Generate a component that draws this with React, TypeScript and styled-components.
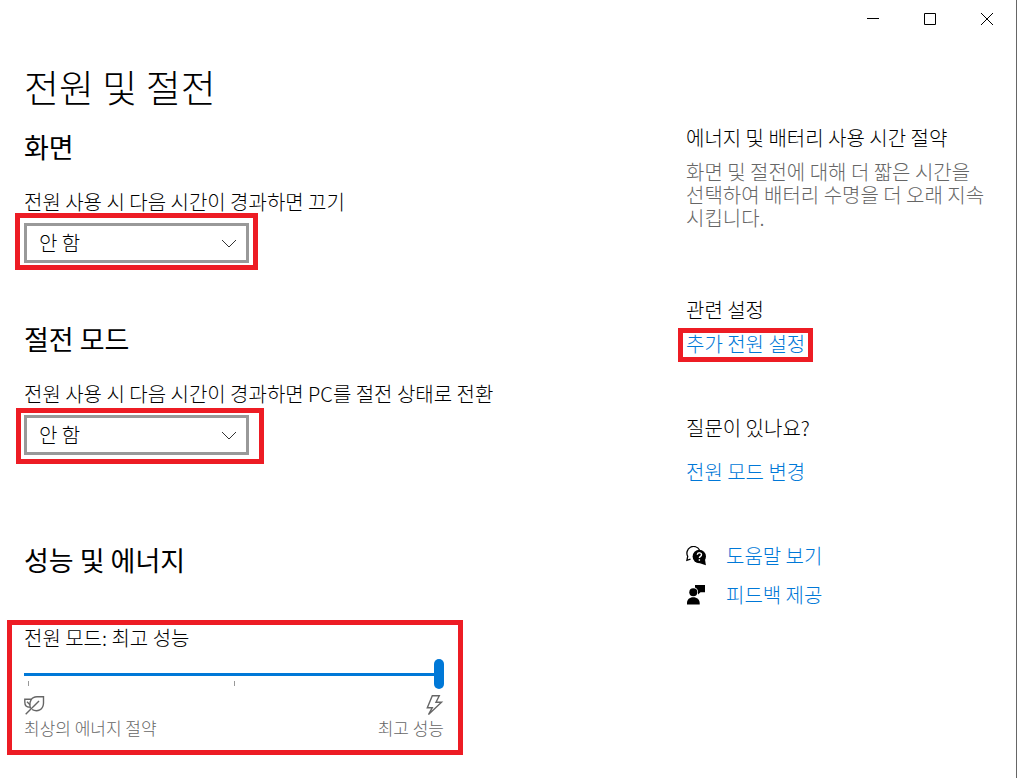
import React, { useState } from "react";
import styled, { createGlobalStyle, css } from "styled-components";

const BLUE = "#0078d7";
const RED = "#ed1c24";

const GlobalStyle = createGlobalStyle`
  * { box-sizing: border-box; }
  body {
    margin: 0;
    background: #fff;
    color: #000;
    font-family: "Noto Sans CJK KR", "Malgun Gothic", sans-serif;
    font-size: 20px;
    font-weight: 300;
    line-height: 24px;
  }
  h1, h2, h3, p { margin: 0; }
`;

const Window = styled.div`
  min-height: 100vh;
  border-right: 1px solid #666;
`;

const TitleBar = styled.header`
  display: flex;
  justify-content: flex-end;
  height: 38px;
  padding-right: 1px;
`;

const CaptionButton = styled.button`
  display: grid;
  place-items: center;
  width: 57px;
  padding: 0;
  border: 0;
  background: none;
`;

const Columns = styled.div`
  display: flex;
  align-items: flex-start;
`;

const Main = styled.main`
  flex: 1;
  min-width: 0;
  padding: 23px 24px 20px;
`;

const PageTitle = styled.h1`
  font-size: 38px;
  font-weight: 300;
  line-height: 50px;
  margin-bottom: 18px;
`;

const Section = styled.section<{ $gap: number }>`
  margin-bottom: ${(p) => p.$gap}px;
`;

const SectionTitle = styled.h2<{ $gap?: number }>`
  font-size: 27px;
  font-weight: 400;
  line-height: 36px;
  margin-bottom: ${(p) => p.$gap ?? 25}px;
`;

const FieldLabel = styled.label`
  display: block;
  margin-bottom: 9px;
`;

/* Red frame drawn around a control to call attention to it. */
const marked = css<{ $mark: string }>`
  position: relative;
  &::after {
    content: "";
    position: absolute;
    inset: ${(p) => p.$mark};
    border: 5px solid ${RED};
    pointer-events: none;
  }
`;

const SelectBox = styled.div<{ $mark: string }>`
  ${marked}
  width: 225px;
  height: 40px;
  svg {
    position: absolute;
    right: 12px;
    top: 16px;
    pointer-events: none;
  }
`;

const Select = styled.select`
  appearance: none;
  width: 100%;
  height: 100%;
  padding: 0 36px 0 12px;
  border: 3px solid #999;
  border-radius: 0;
  background: #fff;
  color: #000;
  font: inherit;
`;

const PowerMode = styled.div<{ $mark: string }>`
  ${marked}
  width: 420px;
  max-width: 100%;
`;

const Slider = styled.input`
  appearance: none;
  display: block;
  width: 100%;
  height: 30px;
  margin: 0;
  background: linear-gradient(${BLUE}, ${BLUE}) center / 100% 3px no-repeat;
  &::-webkit-slider-thumb {
    appearance: none;
    width: 10px;
    height: 30px;
    border-radius: 5px;
    background: ${BLUE};
  }
`;

const Ticks = styled.div`
  display: flex;
  height: 5px;
  margin: -8px 0 8px 4px;
  span {
    width: 206px;
    border-left: 1px solid #999;
  }
`;

const Ends = styled.div`
  display: flex;
  justify-content: space-between;
  color: #666;
  font-size: 17px;
  line-height: 23px;
`;

const End = styled.div<{ $right?: boolean }>`
  display: flex;
  flex-direction: column;
  align-items: ${(p) => (p.$right ? "flex-end" : "flex-start")};
`;

const Sidebar = styled.aside`
  width: 330px;
  padding: 88px 27px 20px 0;
`;

const SideBlock = styled.section<{ $gap: number }>`
  margin-bottom: ${(p) => p.$gap}px;
`;

const SideTitle = styled.h3<{ $gap: number }>`
  font-size: 20px;
  font-weight: 300;
  line-height: 24px;
  margin-bottom: ${(p) => p.$gap}px;
`;

const Note = styled.p`
  color: #666;
  line-height: 23px;
`;

const Link = styled.a`
  color: ${BLUE};
  text-decoration: none;
`;

const MarkedLink = styled.div<{ $mark: string }>`
  ${marked}
  width: fit-content;
`;

const IconRow = styled.div`
  display: flex;
  align-items: center;
  gap: 19px;
  margin-bottom: 15px;
`;

const Chevron = () => (
  <svg width="16" height="10" viewBox="0 0 16 10" fill="none" stroke="#333">
    <path d="M1 1l7 7 7-7" />
  </svg>
);

const LeafIcon = () => (
  <svg width="22" height="22" viewBox="0 0 22 22" fill="none" stroke="#666" strokeWidth="1.4">
    <path d="M1.700 20.300L15 7" />
    <path d="M6.500 14.500C4.500 7.500 7.500 2.800 13 2.800h6.500V9c0 6.500-6 9.500-11.500 6.500" />
    <path d="M7 5.300H.8V8c0 3.500 2 5.200 5 5.200M3 7.800l3 3" />
  </svg>
);

const BoltIcon = () => (
  <svg width="18" height="22" viewBox="0 0 18 22" fill="none" stroke="#666" strokeWidth="1.4">
    <path d="M6.300 1.700h7L10 8.300h5.500L2.500 20.500l3.800-6.800H1.300z" />
  </svg>
);

const HelpIcon = () => (
  <svg width="21" height="21" viewBox="0 0 21 21">
    <path d="M4.500 13.200L.9 14.300l.8-4A6.300 6.300 0 1 1 13.500 4" fill="none" stroke="#000" strokeWidth="1.300" />
    <circle cx="13.300" cy="10.500" r="6.700" />
    <path d="M19 13.500l.9 5.700-6-2z" />
    <path d="M11.300 8.700c.2-2.600 4.200-2.400 4.200 0 0 1.700-2.100 1.600-2.100 3.300M13.400 13.200v1.500" fill="none" stroke="#fff" strokeWidth="1.400" />
  </svg>
);

const FeedbackIcon = () => (
  <svg width="21" height="21" viewBox="0 0 21 21">
    <circle cx="7.300" cy="7.300" r="4" />
    <path d="M1 19.500v-1.500c0-3.500 2.500-5.800 6.300-5.800s6.400 2.300 6.400 5.800v1.500zM9 0h10v7.300h-4.500L12 9.500V7C12 4.800 11 3.300 9 2.600z" />
  </svg>
);

function TimeoutField({ id, label, mark }: { id: string; label: string; mark: string }) {
  return (
    <>
      <FieldLabel htmlFor={id}>{label}</FieldLabel>
      <SelectBox $mark={mark}>
        <Select id={id}>
          <option>안 함</option>
        </Select>
        <Chevron />
      </SelectBox>
    </>
  );
}

export default function App() {
  const [mode, setMode] = useState(2);
  return (
    <Window>
      <GlobalStyle />
      <TitleBar>
        <CaptionButton aria-label="최소화">
          <svg width="12" height="12"><path d="M0 5.500h12" stroke="#000" /></svg>
        </CaptionButton>
        <CaptionButton aria-label="최대화">
          <svg width="12" height="12"><path d="M.5.5h11v11H.5z" fill="none" stroke="#000" /></svg>
        </CaptionButton>
        <CaptionButton aria-label="닫기">
          <svg width="12" height="12"><path d="M0 0l12 12M12 0L0 12" stroke="#000" /></svg>
        </CaptionButton>
      </TitleBar>
      <Columns>
        <Main>
          <PageTitle>전원 및 절전</PageTitle>
          <Section $gap={58}>
            <SectionTitle>화면</SectionTitle>
            <TimeoutField
              id="screen"
              label="전원 사용 시 다음 시간이 경과하면 끄기"
              mark="-10px -9px -7px -9px"
            />
          </Section>
          <Section $gap={87}>
            <SectionTitle>절전 모드</SectionTitle>
            <TimeoutField
              id="sleep"
              label="전원 사용 시 다음 시간이 경과하면 PC를 절전 상태로 전환"
              mark="-7px -15px -9px -8px"
            />
          </Section>
          <Section $gap={0}>
            <SectionTitle $gap={48}>성능 및 에너지</SectionTitle>
            <PowerMode $mark="-6px -19px -16px -17px">
              <FieldLabel htmlFor="mode">전원 모드: 최고 성능</FieldLabel>
              <Slider
                id="mode"
                type="range"
                min={0}
                max={2}
                value={mode}
                onChange={(e) => setMode(Number(e.target.value))}
              />
              <Ticks><span /><span /></Ticks>
              <Ends>
                <End><LeafIcon />최상의 에너지 절약</End>
                <End $right><BoltIcon />최고 성능</End>
              </Ends>
            </PowerMode>
          </Section>
        </Main>
        <Sidebar>
          <SideBlock $gap={69}>
            <SideTitle $gap={10}>에너지 및 배터리 사용 시간 절약</SideTitle>
            <Note>화면 및 절전에 대해 더 짧은 시간을 선택하여 배터리 수명을 더 오래 지속시킵니다.</Note>
          </SideBlock>
          <SideBlock $gap={60}>
            <SideTitle $gap={10}>관련 설정</SideTitle>
            <MarkedLink $mark="-4px -8px -6px -8px">
              <Link href="#additional">추가 전원 설정</Link>
            </MarkedLink>
          </SideBlock>
          <SideBlock $gap={60}>
            <SideTitle $gap={20}>질문이 있나요?</SideTitle>
            <Link href="#mode-change">전원 모드 변경</Link>
          </SideBlock>
          <IconRow><HelpIcon /><Link href="#help">도움말 보기</Link></IconRow>
          <IconRow><FeedbackIcon /><Link href="#feedback">피드백 제공</Link></IconRow>
        </Sidebar>
      </Columns>
    </Window>
  );
}
